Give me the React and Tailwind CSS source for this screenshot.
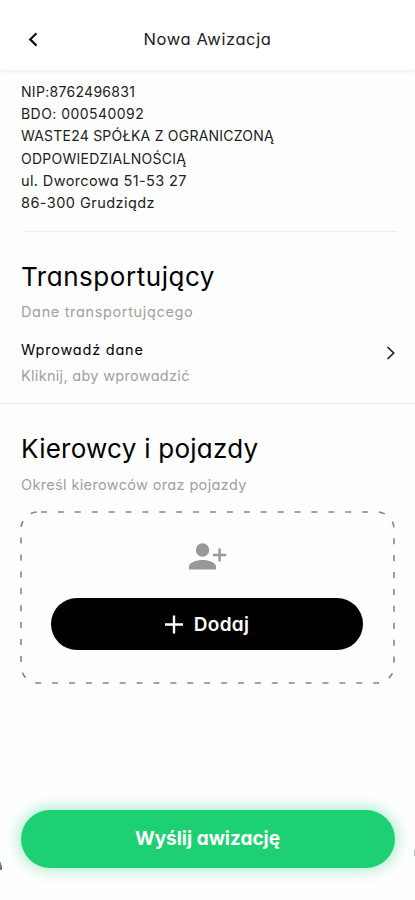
const company = [
  { text: 'NIP:8762496831', style: 'text-[14px] tracking-[0.3px]' },
  { text: 'BDO: 000540092', style: 'text-[14px] tracking-[0.45px]' },
  { text: 'WASTE24 SPÓŁKA Z OGRANICZONĄ', style: 'text-[14px] tracking-[0.22px]' },
  { text: 'ODPOWIEDZIALNOŚCIĄ', style: 'text-[14px] tracking-[0.25px]' },
  { text: 'ul. Dworcowa 51-53 27', style: 'text-[14.5px] tracking-[0.38px]' },
  { text: '86-300 Grudziądz', style: 'text-[14.5px] tracking-[0.45px]' },
];

function Header() {
  return (
    <header className="relative flex h-[70px] shrink-0 items-center justify-center bg-white pt-[8px] shadow-[0_2px_5px_rgba(0,0,0,0.06)]">
      <button className="absolute left-[28px] top-[32px]">
        <svg width="10" height="15" viewBox="0 0 10 15" fill="none" stroke="#111" strokeWidth="2.2">
          <path d="M8.5 1.2 L2.2 7.4 L8.5 13.6" />
        </svg>
      </button>
      <h1 className="text-[16.5px] leading-6 tracking-[0.58px] text-[#222]">Nowa Awizacja</h1>
    </header>
  );
}

function DriversBox() {
  return (
    <div className="relative ml-5 mt-[15px] flex h-[173px] w-[375px] flex-col items-center">
      <svg className="absolute inset-0" width="375" height="173" fill="none">
        <rect x="1" y="1" width="373" height="171" rx="17" stroke="#858585" strokeWidth="1.6" strokeDasharray="6 10.9" strokeDashoffset="-3" />
      </svg>
      <svg className="mt-[32px]" width="38" height="28" viewBox="0 0 38 28" fill="#989898">
        <circle cx="13.5" cy="7" r="6.7" />
        <path d="M0 26.5 V23.5 C0 19.5 7.5 17 13.5 17 S27 19.5 27 23.5 V26.5 Z" />
        <path d="M29.3 5.5 h2.5 v5.3 h5.4 v2.5 h-5.4 v5.3 h-2.5 v-5.3 h-5.4 v-2.5 h5.4 Z" />
      </svg>
      <button className="mr-px mt-[27px] flex h-[52px] w-[312px] items-center justify-center gap-[11px] rounded-full bg-black text-white">
        <svg width="18" height="19" viewBox="0 0 18 19" stroke="white" strokeWidth="2.4">
          <path d="M9 0.5 V18.5 M0 9.5 H18" />
        </svg>
        <span className="pt-px text-[19px] font-semibold leading-6 tracking-[0.3px]">Dodaj</span>
      </button>
    </div>
  );
}

export default function App() {
  return (
    <div className="relative flex h-[900px] w-[415px] flex-col overflow-hidden bg-[#fefefe] font-['Inter',sans-serif] text-[#222] [font-feature-settings:'cv11']">
      <Header />

      <div className="mt-[11px] flex flex-col pl-[21px] leading-[22.2px]">
        {company.map((line) => (
          <p key={line.text} className={'whitespace-nowrap ' + line.style}>{line.text}</p>
        ))}
      </div>
      <hr className="ml-[23px] mr-[18px] mt-[17px] border-[#eeeeee]" />

      <section className="flex h-[172px] flex-col border-b border-[#e8e8e8] pl-[21px] pr-[19px]">
        <h2 className="mt-[29px] text-[26px] leading-8 tracking-[0.54px] text-black">Transportujący</h2>
        <p className="mt-[8px] text-[14.5px] leading-[22px] tracking-[0.65px] text-[#a0a0a0]">Dane transportującego</p>
        <div className="mt-[16px] flex items-center justify-between">
          <div>
            <p className="text-[14.5px] leading-[22px] tracking-[0.78px] text-black">Wprowadź dane</p>
            <p className="mt-[4px] text-[14.5px] leading-[22px] tracking-[0.3px] text-[#a0a0a0]">Kliknij, aby wprowadzić</p>
          </div>
          <svg className="-mt-[21px]" width="10" height="14" viewBox="0 0 10 14" fill="none" stroke="#222" strokeWidth="1.7">
            <path d="M1.5 1 L7.7 7 L1.5 13" />
          </svg>
        </div>
      </section>

      <section className="flex flex-col">
        <h2 className="ml-[21px] mt-[29px] text-[26px] leading-8 tracking-[0.25px] text-black">Kierowcy i pojazdy</h2>
        <p className="ml-[21px] mt-[9px] text-[14.5px] leading-[22px] tracking-[0.35px] text-[#a0a0a0]">Określ kierowców oraz pojazdy</p>
        <DriversBox />
      </section>

      <footer className="mb-[32px] mt-auto flex justify-center">
        <button className="h-[58px] w-[374px] rounded-full bg-[#1dd073] pt-px text-[19px] font-bold text-white shadow-[0_0_14px_3px_rgba(29,208,115,0.35)]">
          Wyślij awizację
        </button>
      </footer>
      <i className="absolute bottom-[30px] left-0 h-[9px] w-[2px] bg-[#777] [clip-path:polygon(0_0,100%_60%,100%_100%,0_100%)]" />
      <i className="absolute bottom-[44px] right-0 h-[6px] w-px bg-[#bbb]" />
    </div>
  );
}
